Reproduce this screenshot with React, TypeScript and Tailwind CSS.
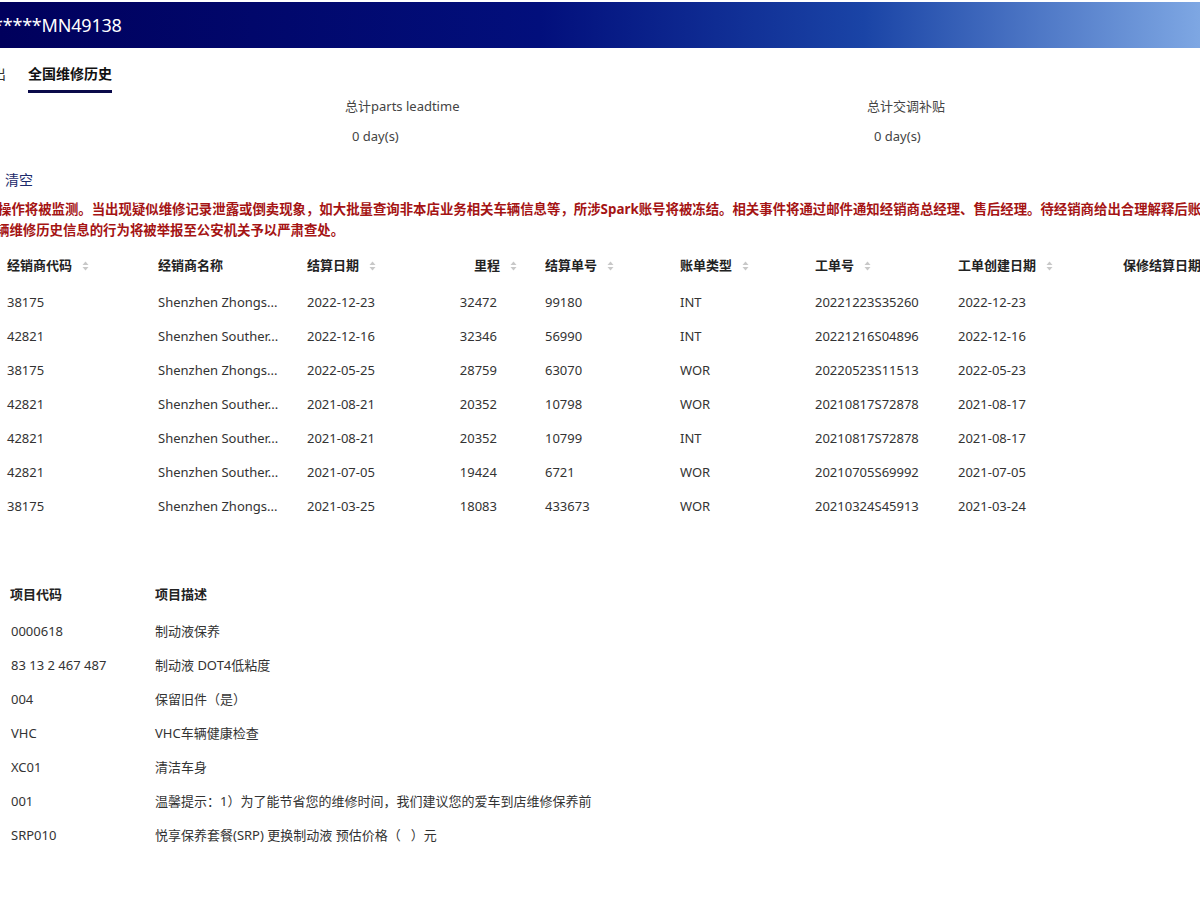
import React from "react";

const font = { fontFamily: '"Noto Sans", "Noto Sans CJK SC", sans-serif' };

function SortIcon() {
  return (
    <svg width="7" height="10" viewBox="0 0 7 10" className="ml-[10px] shrink-0">
      <path d="M3.5 0.5 L6.5 4 L0.5 4 Z" fill="#c8c8c8" />
      <path d="M0.5 6 L6.5 6 L3.5 9.5 Z" fill="#c8c8c8" />
    </svg>
  );
}

const rows = [
  ["38175", "Shenzhen Zhongs...", "2022-12-23", "32472", "99180", "INT", "20221223S35260", "2022-12-23"],
  ["42821", "Shenzhen Souther...", "2022-12-16", "32346", "56990", "INT", "20221216S04896", "2022-12-16"],
  ["38175", "Shenzhen Zhongs...", "2022-05-25", "28759", "63070", "WOR", "20220523S11513", "2022-05-23"],
  ["42821", "Shenzhen Souther...", "2021-08-21", "20352", "10798", "WOR", "20210817S72878", "2021-08-17"],
  ["42821", "Shenzhen Souther...", "2021-08-21", "20352", "10799", "INT", "20210817S72878", "2021-08-17"],
  ["42821", "Shenzhen Souther...", "2021-07-05", "19424", "6721", "WOR", "20210705S69992", "2021-07-05"],
  ["38175", "Shenzhen Zhongs...", "2021-03-25", "18083", "433673", "WOR", "20210324S45913", "2021-03-24"],
];

const items = [
  ["0000618", "制动液保养"],
  ["83 13 2 467 487", "制动液 DOT4低粘度"],
  ["004", "保留旧件（是）"],
  ["VHC", "VHC车辆健康检查"],
  ["XC01", "清洁车身"],
  ["001", "温馨提示：1）为了能节省您的维修时间，我们建议您的爱车到店维修保养前"],
  ["SRP010", "悦享保养套餐(SRP) 更换制动液 预估价格（\u00a0\u00a0\u00a0）元"],
];

const grid = "grid grid-cols-[151px_149px_100px_138px_135px_135px_143px_165px_1fr]";

export default function App() {
  return (
    <div className="w-[1200px] h-[900px] overflow-hidden bg-white text-[#333]" style={font}>
      <div className="pt-[2px]">
        <div className="h-[46px] flex items-center bg-[linear-gradient(90deg,#00005c_0%,#020f7c_45%,#1a44a6_72%,#7ea7e3_100%)]">
          <span className="text-white text-[18px] ml-[-7px] tracking-[-0.2px]">*****MN49138</span>
        </div>
      </div>

      {/* tabs */}
      <div className="h-[46px] flex items-start pt-[15px] text-[14px]">
        <span className="ml-[-8px] text-[#333]">出</span>
        <div className="ml-[22px] flex flex-col">
          <span className="font-bold text-[#111] leading-[22px]">全国维修历史</span>
          <div className="mt-[5px] h-[3px] bg-[#0a0a4a]" />
        </div>
      </div>

      {/* summary */}
      <div className="h-[70px] flex text-[13px] text-[#444]">
        <div className="ml-[345px] w-[522px] flex flex-col">
          <span className="leading-[20px] pt-[2px]">总计parts leadtime</span>
          <span className="leading-[20px] mt-[10px] pl-[7px]">0 day(s)</span>
        </div>
        <div className="flex flex-col">
          <span className="leading-[20px] pt-[2px]">总计交调补贴</span>
          <span className="leading-[20px] mt-[10px] pl-[7px]">0 day(s)</span>
        </div>
      </div>

      {/* clear */}
      <div className="h-[30px] flex items-center pl-[5px] text-[14px] text-[#1c2a6b] pt-[1px]">清空</div>

      {/* warning */}
      <div className="mt-[5px] text-[13.4px] font-bold text-[#a51414] leading-[21px] whitespace-nowrap">
        <div className="ml-[-2px]">操作将被监测。当出现疑似维修记录泄露或倒卖现象，如大批量查询非本店业务相关车辆信息等，所涉Spark账号将被冻结。相关事件将通过邮件通知经销商总经理、售后经理。待经销商给出合理解释后账号将被解冻</div>
        <div className="ml-[-4px]">辆维修历史信息的行为将被举报至公安机关予以严肃查处。</div>
      </div>

      {/* main table */}
      <div className="mt-[5px] text-[13px] whitespace-nowrap">
        <div className={`${grid} h-[40px] items-center font-bold text-[#222]`}>
          <div className="pl-[7px] flex items-center">经销商代码<SortIcon /></div>
          <div className="pl-[7px]">经销商名称</div>
          <div className="pl-[7px] flex items-center">结算日期<SortIcon /></div>
          <div className="flex items-center justify-end pr-[21px]">里程<SortIcon /></div>
          <div className="pl-[7px] flex items-center">结算单号<SortIcon /></div>
          <div className="pl-[7px] flex items-center">账单类型<SortIcon /></div>
          <div className="pl-[7px] flex items-center">工单号<SortIcon /></div>
          <div className="pl-[7px] flex items-center">工单创建日期<SortIcon /></div>
          <div className="pl-[7px]">保修结算日期</div>
        </div>
        {rows.map((r, i) => (
          <div key={i} className={`${grid} h-[34px] items-center text-[#333]`}>
            <div className="pl-[7px]">{r[0]}</div>
            <div className="pl-[7px]">{r[1]}</div>
            <div className="pl-[7px]">{r[2]}</div>
            <div className="text-right pr-[41px]">{r[3]}</div>
            <div className="pl-[7px]">{r[4]}</div>
            <div className="pl-[7px]">{r[5]}</div>
            <div className="pl-[7px]">{r[6]}</div>
            <div className="pl-[7px]">{r[7]}</div>
            <div className="pl-[7px]"></div>
          </div>
        ))}
      </div>

      {/* items table */}
      <div className="mt-[51px] text-[13px] whitespace-nowrap">
        <div className="grid grid-cols-[145px_1fr] h-[40px] items-center font-bold text-[#222]">
          <div className="pl-[10px]">项目代码</div>
          <div className="pl-[10px]">项目描述</div>
        </div>
        {items.map((it, i) => (
          <div key={i} className="grid grid-cols-[145px_1fr] h-[34px] items-center text-[#333]">
            <div className="pl-[11px]">{it[0]}</div>
            <div className="pl-[10px]">{it[1]}</div>
          </div>
        ))}
      </div>
    </div>
  );
}
